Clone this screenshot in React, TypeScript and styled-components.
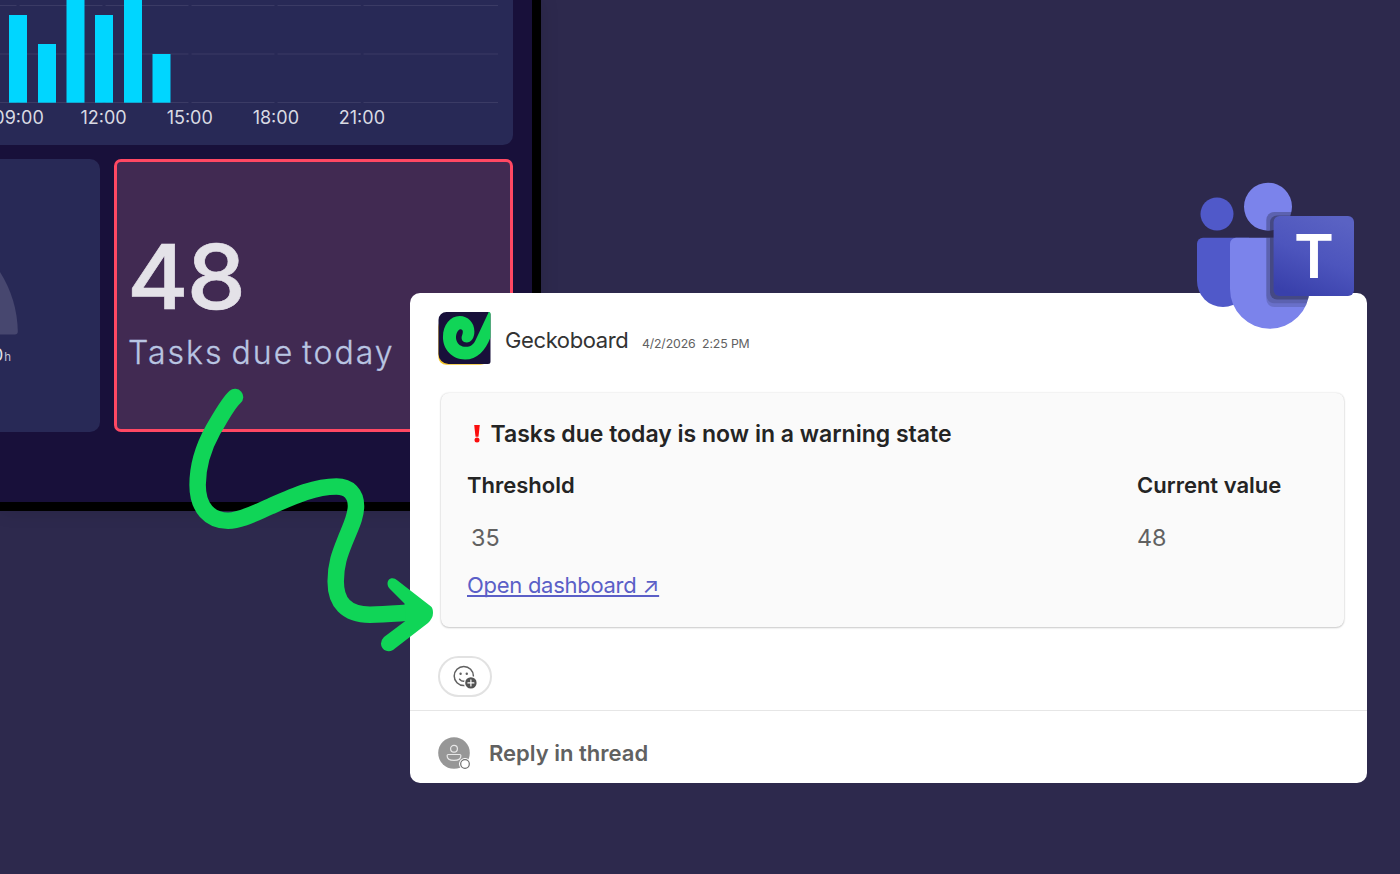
import styled, { createGlobalStyle } from "styled-components";

const GlobalStyle = createGlobalStyle`
  * {
    box-sizing: border-box;
  }

  body {
    margin: 0;
    background-color: #2d294d;
    font-family: Inter, "Liberation Sans", sans-serif;
  }
`;

const Page = styled.main`
  position: relative;
  width: 1400px;
  height: 874px;
  overflow: hidden;
  background-color: #2d294d;
`;

const Dashboard = styled.section`
  width: 541px;
  height: 511px;
  border-right: 9px solid #000000;
  border-bottom: 9px solid #000000;
  background-color: #18103a;
  box-shadow: 0 0 18px rgba(0, 0, 0, 0.12);
`;

const ChartWidget = styled.div`
  width: 512.5px;
  height: 144.5px;
  border-bottom-right-radius: 10px;
  background-color: #282956;
  overflow: hidden;
`;

const ChartSvg = styled.svg`
  display: block;
`;

const HourLabels = styled.div`
  display: grid;
  grid-template-columns: repeat(5, 86.1px);
  margin: 3.5px 0 0 -25.5px;
`;

const HourLabel = styled.span`
  color: #d9dae3;
  font-size: 18px;
  line-height: 22px;
  text-align: center;

  &:first-child {
    padding-left: 2px;
  }
`;

const WidgetRow = styled.div`
  display: flex;
  gap: 14px;
  margin-top: 14px;
`;

const GaugeWidget = styled.div`
  width: 99.5px;
  height: 273px;
  padding-top: 79.5px;
  border-radius: 0 10px 10px 0;
  background-color: #282956;
  overflow: hidden;
`;

const GaugeValue = styled.div`
  margin: 8px 0 0 -7.5px;
  color: #e3e3ea;
  font-size: 17px;
  line-height: 22px;
`;

const GaugeUnit = styled.span`
  margin-left: 1px;
  color: #c3c5d6;
  font-size: 11.5px;
`;

const AlertWidget = styled.div`
  width: 399px;
  height: 273px;
  padding: 65.5px 0 0 10px;
  border: 3px solid #ff4863;
  border-radius: 7px;
  background-color: #412a52;
`;

const AlertValue = styled.div`
  color: #e4e2e8;
  font-size: 90px;
  font-weight: 500;
  line-height: 100px;
  letter-spacing: -2px;
  transform: scaleX(1.045);
  transform-origin: left;
  -webkit-text-stroke: 0.6px #e4e2e8;
`;

const AlertLabel = styled.div`
  margin: 5.5px 0 0 1.5px;
  color: #b9c5e2;
  font-size: 32px;
  font-weight: 300;
  line-height: 40px;
  letter-spacing: 2px;
  word-spacing: -3px;
  white-space: nowrap;
  -webkit-text-stroke: 0.3px #b9c5e2;
`;

const MessageCard = styled.article`
  position: absolute;
  top: 293px;
  left: 410px;
  width: 957px;
  height: 490px;
  border-radius: 10px;
  background-color: #ffffff;
`;

const MessageHeader = styled.header`
  display: flex;
  align-items: flex-start;
  gap: 14px;
  padding: 18px 0 0 28px;
  height: 99.5px;
`;

const Sender = styled.div`
  display: flex;
  align-items: baseline;
  gap: 13.5px;
  padding-top: 14.5px;
`;

const SenderName = styled.span`
  color: #333333;
  font-size: 22px;
  line-height: 28px;
  letter-spacing: -0.38px;
`;

const SentAt = styled.span`
  color: #616161;
  font-size: 12.3px;
  letter-spacing: -0.14px;
  white-space: pre;
`;

const Attachment = styled.div`
  width: 902.5px;
  height: 234px;
  margin-left: 31px;
  padding: 27px 0 0 26px;
  border-radius: 8px;
  background-color: #fafafa;
  box-shadow: 0 0 2px rgba(0, 0, 0, 0.16), 0 1px 2px rgba(0, 0, 0, 0.18);
`;

const AttachmentTitle = styled.h2`
  display: flex;
  align-items: center;
  gap: 9.5px;
  margin: 0;
  padding-left: 6px;
  color: #242424;
  font-size: 23px;
  font-weight: 600;
  line-height: 28px;
`;

const Facts = styled.dl`
  display: grid;
  grid-template-columns: 670px 1fr;
  row-gap: 25px;
  margin: 23px 0 0;
`;

const FactName = styled.dt`
  color: #242424;
  font-size: 22px;
  font-weight: 600;
  line-height: 28px;
`;

const FactValue = styled.dd<{ $indent?: number }>`
  margin: 0 0 0 ${({ $indent = 0 }) => $indent}px;
  color: #616161;
  font-size: 23.3px;
  line-height: 28px;
`;

const DashboardLink = styled.a`
  display: inline-block;
  margin-top: 19px;
  color: #5b5fc7;
  font-size: 22px;
  line-height: 28px;
  letter-spacing: -0.28px;
  text-decoration: underline;
  text-decoration-thickness: 1.5px;
  text-decoration-skip-ink: none;
  text-underline-offset: 1.5px;
`;

const ReactionButton = styled.button`
  display: flex;
  align-items: center;
  justify-content: center;
  width: 54px;
  height: 41px;
  margin: 29.5px 0 13px 28px;
  padding: 0;
  border: 2px solid #e2e2e2;
  border-radius: 21px;
  background-color: #ffffff;
`;

const ReplyBar = styled.footer`
  display: flex;
  align-items: center;
  gap: 18px;
  height: 72px;
  padding: 13px 0 0 28px;
  border-top: 1px solid #e6e6e6;
`;

const ReplyText = styled.span`
  color: #616161;
  font-size: 22px;
  font-weight: 600;
  line-height: 28px;
`;

const TeamsBadge = styled.svg`
  position: absolute;
  top: 180px;
  left: 1190px;
`;

const TeamsLetter = styled.text`
  fill: #ffffff;
  font-size: 60.5px;
  font-weight: 600;
`;

const Arrow = styled.svg`
  position: absolute;
  top: 380px;
  left: 180px;
`;

const hours = ["09:00", "12:00", "15:00", "18:00", "21:00"];

const bars = [
  { x: 9, top: 15 },
  { x: 38, top: 44 },
  { x: 66.5, top: 0 },
  { x: 95, top: 15 },
  { x: 124, top: 0 },
  { x: 152.5, top: 54 },
];

const gridSegments = [
  [0, 16.5],
  [19.5, 102.5],
  [105.5, 188.5],
  [191.5, 274.5],
  [277.5, 360.8],
  [363.5, 498],
];

function TaskChart() {
  return (
    <ChartSvg width="512" height="103" viewBox="0 0 512 103">
      {[5, 53.5, 102].map((y) =>
        gridSegments.map(([from, to]) => (
          <rect key={`${y}-${from}`} x={from} y={y} width={to - from} height="1" fill="#3b3b65" />
        ))
      )}
      {bars.map(({ x, top }) => (
        <rect key={x} x={x} y={top} width="18" height={102.7 - top} fill="#00d6ff" />
      ))}
    </ChartSvg>
  );
}

function GeckoLogo() {
  return (
    <svg width="53" height="54" viewBox="0 0 53 54">
      <rect x="0.3" y="8" width="50" height="45.8" rx="8" fill="#f5c324" />
      <path
        d="M8.5 1H50a2.5 2.5 0 0 1 2.5 2.5V50.5a2.5 2.5 0 0 1-2.5 2.5H10.5A10 10 0 0 1 .5 43V9a8 8 0 0 1 8-8Z"
        fill="#18103a"
      />
      <g transform="translate(0.6 1) scale(0.3345)">
        <path
          d="M150 0H152Q155 1 155 5V76C140 115 115 142 79 142C40 142 13 112 13 75C13 38 35 12 63 12C88 12 107 32 107 58C107 78 97 91 84 91C72 91 66 81 70 70C72 65 73 60 72 56C69 50 63 50 59 55C45 72 52 104 82 104C95 104 104 97 110 85Z"
          fill="#10d557"
        />
      </g>
    </svg>
  );
}

function WarningMark() {
  return (
    <svg width="8" height="18" viewBox="0 0 8 18">
      <path d="M1.2 0H6.8L5.5 11.8H2.5Z" fill="#fb0d0d" />
      <circle cx="4" cy="15.1" r="2.5" fill="#fb0d0d" />
    </svg>
  );
}

function AddReactionIcon() {
  return (
    <svg width="26" height="26" viewBox="0 0 26 26" fill="none">
      <circle cx="11.8" cy="12" r="9.6" stroke="#616161" strokeWidth="1.5" />
      <circle cx="8.6" cy="9.8" r="1.2" fill="#616161" />
      <circle cx="14.8" cy="9.8" r="1.2" fill="#616161" />
      <path d="M7.6 15.2a5.5 5.5 0 0 0 6 1.8" stroke="#616161" strokeWidth="1.5" strokeLinecap="round" />
      <circle cx="18.9" cy="18.9" r="7" fill="#ffffff" />
      <circle cx="18.9" cy="18.9" r="5.7" fill="#525252" />
      <path d="M18.9 15.9v6M15.9 18.9h6" stroke="#ffffff" strokeWidth="1.2" strokeLinecap="round" />
    </svg>
  );
}

function Avatar() {
  return (
    <svg width="33" height="33" viewBox="0 0 33 33" fill="none">
      <circle cx="16" cy="16" r="15.8" fill="#979797" />
      <circle cx="16" cy="11.8" r="3.4" stroke="#e8e8e8" strokeWidth="1.2" />
      <path
        d="M10.3 17.5H21.7Q22.9 17.5 22.9 18.7C22.9 21.8 19.8 23.4 16 23.4S9.1 21.8 9.1 18.7Q9.1 17.5 10.3 17.5Z"
        stroke="#e8e8e8"
        strokeWidth="1.2"
      />
      <circle cx="27" cy="27" r="6" fill="#ffffff" />
      <circle cx="27" cy="27" r="4.3" stroke="#707070" strokeWidth="1.2" />
    </svg>
  );
}

function TeamsLogo() {
  return (
    <TeamsBadge width="170" height="152" viewBox="1190 180 170 152">
      <defs>
        <linearGradient id="tile" x1="0.7" y1="0" x2="0.3" y2="1">
          <stop offset="0" stopColor="#5a62c3" />
          <stop offset="0.5" stopColor="#4d55bd" />
          <stop offset="1" stopColor="#3940ab" />
        </linearGradient>
        <clipPath id="person">
          <circle cx="1268" cy="206.7" r="24" />
          <path d="M1236 237.7H1309.5V289A39.7 39.7 0 0 1 1230 289V243.7A6 6 0 0 1 1236 237.7Z" />
        </clipPath>
      </defs>
      <circle cx="1217" cy="214" r="16.5" fill="#5059c9" />
      <path d="M1203 237.7H1249V281A26 26 0 0 1 1197 281V243.7A6 6 0 0 1 1203 237.7Z" fill="#5059c9" />
      <g clipPath="url(#person)">
        <rect x="1225" y="180" width="90" height="150" fill="#7b83eb" />
        <rect x="1266.3" y="212" width="80" height="95" rx="8" opacity="0.14" />
        <rect x="1266.3" y="212" width="80" height="91.3" rx="8" opacity="0.12" />
        <rect x="1270" y="215.5" width="80" height="84" rx="7" opacity="0.25" />
      </g>
      <rect x="1273.6" y="216" width="80.4" height="80" rx="6" fill="url(#tile)" />
      <TeamsLetter x="1314" y="278" textAnchor="middle">
        T
      </TeamsLetter>
    </TeamsBadge>
  );
}

function GreenArrow() {
  return (
    <Arrow width="260" height="280" viewBox="180 380 260 280" fill="none">
      <path
        d="M235 397C228 403 219 420 213 430C203 448 197.6 468 197.6 485C197.6 508 210 520.7 228 520.7C241 520.7 255 513 270 506.5C295 495.5 315 486.5 336.5 486.5C349 486.5 356 494 356 506C356 517 350.5 527 345 541C340 553.5 335.7 564 335.7 581.5C335.7 602 346 614.7 370 614.7C385 614.7 396 613.5 412 612.5"
        stroke="#10d557"
        strokeWidth="16.5"
        strokeLinecap="round"
      />
      <path
        d="M397.5 580.5L431 606.5Q433 608 433 613Q433 618 428 623L393 650C387 653.5 381 649 381 643.5Q381 640 384 637L406 620.5L404.5 603.5L389.5 588.5C386 584.5 387.5 579 391.5 578.3Q394.5 577.8 397.5 580.5Z"
        fill="#10d557"
      />
    </Arrow>
  );
}

function App() {
  return (
    <Page>
      <GlobalStyle />
      <Dashboard>
        <ChartWidget>
          <TaskChart />
          <HourLabels>
            {hours.map((hour) => (
              <HourLabel key={hour}>{hour}</HourLabel>
            ))}
          </HourLabels>
        </ChartWidget>
        <WidgetRow>
          <GaugeWidget>
            <ChartSvg width="20" height="98" viewBox="0 0 20 98">
              <path d="M0 34A116 116 0 0 1 17.8 93.5Q17.8 96.5 14.8 96.5H0Z" fill="#47476f" />
            </ChartSvg>
            <GaugeValue>
              0<GaugeUnit>h</GaugeUnit>
            </GaugeValue>
          </GaugeWidget>
          <AlertWidget>
            <AlertValue>48</AlertValue>
            <AlertLabel>Tasks due today</AlertLabel>
          </AlertWidget>
        </WidgetRow>
      </Dashboard>
      <MessageCard>
        <MessageHeader>
          <GeckoLogo />
          <Sender>
            <SenderName>Geckoboard</SenderName>
            <SentAt>{"4/2/2026  2:25 PM"}</SentAt>
          </Sender>
        </MessageHeader>
        <Attachment>
          <AttachmentTitle>
            <WarningMark />
            Tasks due today is now in a warning state
          </AttachmentTitle>
          <Facts>
            <FactName>Threshold</FactName>
            <FactName>Current value</FactName>
            <FactValue $indent={4}>35</FactValue>
            <FactValue>48</FactValue>
          </Facts>
          <DashboardLink>Open dashboard ↗</DashboardLink>
        </Attachment>
        <ReactionButton>
          <AddReactionIcon />
        </ReactionButton>
        <ReplyBar>
          <Avatar />
          <ReplyText>Reply in thread</ReplyText>
        </ReplyBar>
      </MessageCard>
      <TeamsLogo />
      <GreenArrow />
    </Page>
  );
}

export default App;
